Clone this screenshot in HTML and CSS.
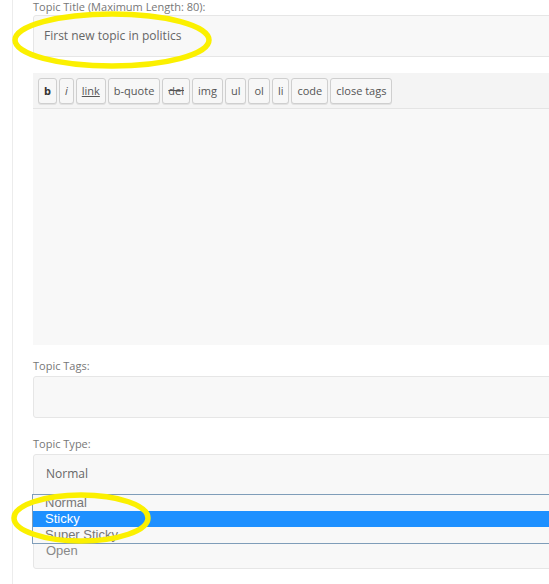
FILE: index.html
```html
<!DOCTYPE html>
<html>
<head>
<meta charset="utf-8">
<link rel="stylesheet" href="styles.css">
</head>
<body>
<div class="page">
  <div class="form">
    <label class="label first">Topic Title (Maximum Length: 80):</label>
    <div class="field title">First new topic in politics</div>

    <div class="editor">
      <div class="toolbar">
        <span class="btn bold">b</span>
        <span class="btn ital">i</span>
        <span class="btn und">link</span>
        <span class="btn">b-quote</span>
        <span class="btn strike">del</span>
        <span class="btn">img</span>
        <span class="btn">ul</span>
        <span class="btn">ol</span>
        <span class="btn">li</span>
        <span class="btn">code</span>
        <span class="btn">close tags</span>
      </div>
      <div class="textarea"></div>
    </div>

    <label class="label tags-label">Topic Tags:</label>
    <div class="field tags"></div>

    <label class="label type-label">Topic Type:</label>
    <div class="select">
      <div class="sel-value">Normal</div>
      <div class="sel-next">Open</div>
      <ul class="dropdown">
        <li>Normal</li>
        <li class="active">Sticky</li>
        <li>Super Sticky</li>
      </ul>
    </div>
  </div>

  <svg class="ring ring-title" width="210" height="64" viewBox="0 0 210 64"><ellipse cx="105" cy="32" rx="97" ry="26" fill="none" stroke="#fbf000" stroke-width="5.5"/></svg>
  <svg class="ring ring-sticky" width="150" height="60" viewBox="0 0 150 60"><ellipse cx="75" cy="30" rx="67" ry="23" fill="none" stroke="#fbf000" stroke-width="5.5"/></svg>
</div>
</body>
</html>
```

FILE: styles.css
```css
html, body {
  margin: 0;
  padding: 0;
  background: #fff;
  overflow: hidden;
}
body {
  width: 549px;
  height: 584px;
  font-family: "Open Sans", "Noto Sans", sans-serif;
  color: #666;
}
.page {
  position: relative;
  margin-left: 12px;
  border-left: 1px solid #ececec;
  height: 584px;
}
.form {
  padding-left: 20px;
  width: 600px;
}
.label {
  display: block;
  font-size: 11px;
  line-height: 15px;
  color: #777;
  height: 15px;
  margin-top: 13px;
  margin-bottom: 3px;
}
.label.first {
  margin-top: 0;
  height: 13px;
  line-height: 13px;
  margin-bottom: 2px;
}
.label.type-label {
  margin-top: 18px;
}
.field {
  box-sizing: border-box;
  height: 42px;
  border: 1px solid #e6e6e6;
  border-radius: 3px;
  background: #f8f8f8;
  font-size: 12px;
  color: #666;
  padding: 0 10px;
  line-height: 40px;
}
.editor {
  margin-top: 16px;
  background: #f8f8f8;
}
.toolbar {
  box-sizing: border-box;
  height: 36px;
  background: #f4f4f4;
  border-bottom: 1px solid #e4e4e4;
  padding: 5px 5px 0;
  display: flex;
  gap: 2px;
}
.btn {
  box-sizing: border-box;
  height: 26px;
  line-height: 24px;
  padding: 0 5px;
  border: 1px solid #cfcfcf;
  border-radius: 3px;
  background: #f7f7f7;
  font-size: 11px;
  color: #555;
  box-shadow: 0 1px 0 #e2e2e2;
}
.btn.bold { font-weight: bold; color: #333; }
.btn.ital { font-style: italic; }
.btn.und { text-decoration: underline; }
.btn.strike { text-decoration: line-through; }
.textarea {
  height: 236px;
  background: #f8f8f8;
  border-radius: 0 0 3px 3px;
}
.select {
  position: relative;
  box-sizing: border-box;
  height: 115px;
  border: 1px solid #e6e6e6;
  border-radius: 3px;
  background: #f8f8f8;
  padding: 10px 12px 0;
}
.sel-value {
  font-family: "Open Sans", sans-serif;
  font-size: 12px;
  line-height: 18px;
  color: #666;
}
.sel-next {
  margin-top: 60px;
  font-family: "Liberation Sans", Arial, sans-serif;
  font-size: 13px;
  line-height: 16px;
  color: #888;
}
.dropdown {
  position: absolute;
  left: -2px;
  top: 39px;
  right: 0;
  height: 48px;
  margin: 0;
  padding: 0;
  list-style: none;
  border: 1px solid #7f9db9;
  background: #f8f8f8;
  overflow: hidden;
  font-family: "Liberation Sans", Arial, sans-serif;
  font-size: 13px;
}
.dropdown li {
  height: 16px;
  line-height: 16px;
  padding-left: 12px;
  color: #777;
}
.dropdown li.active {
  background: #1e90ff;
  color: #fff;
}
.ring {
  position: absolute;
  display: block;
}
.ring-title {
  left: -6px;
  top: 8px;
}
.ring-sticky {
  left: -7px;
  top: 488px;
}
```
